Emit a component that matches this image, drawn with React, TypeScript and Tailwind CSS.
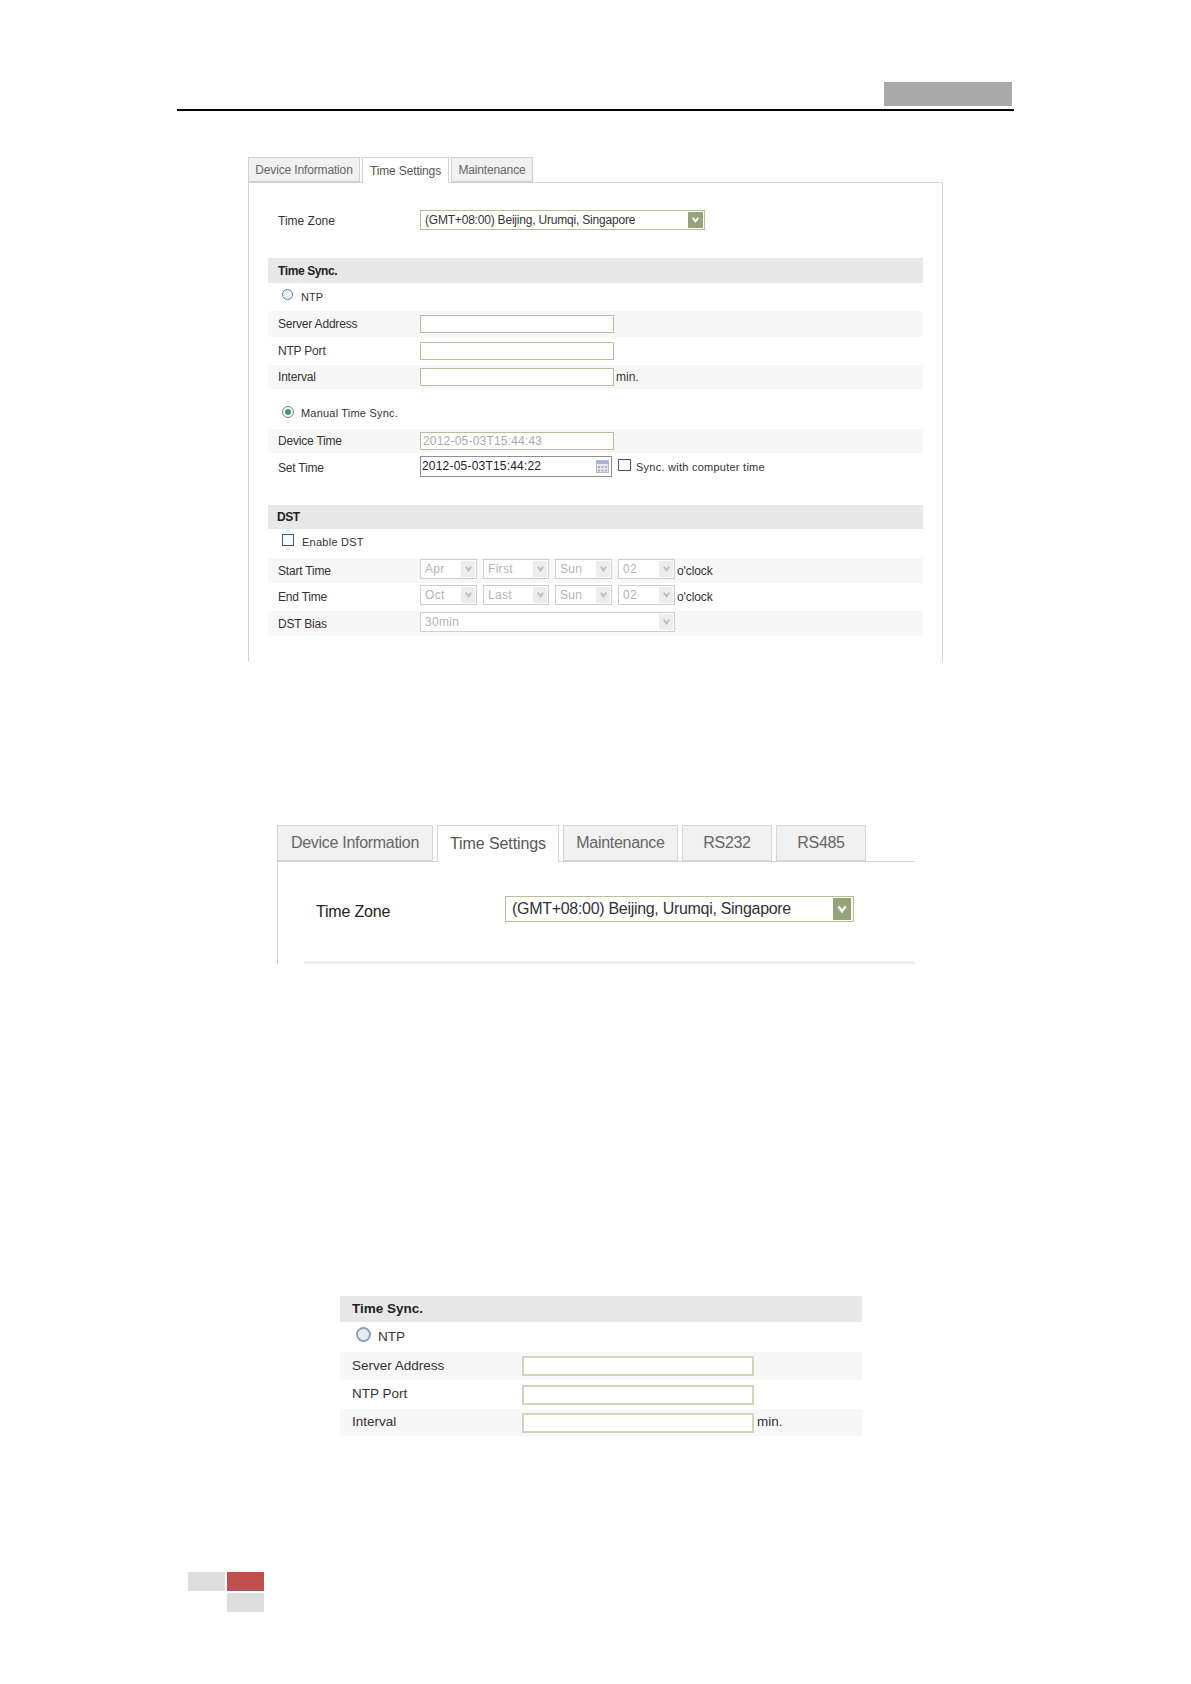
import type { ReactNode } from "react";

const font = { fontFamily: '"Liberation Sans", Arial, sans-serif' };

function SmallTab({ label, active, width }: { label: string; active?: boolean; width: string }) {
  return (
    <div
      className={`flex items-center justify-center border border-[#d2d2d2] text-[12px] tracking-[-0.15px] ${width} ${
        active
          ? "relative z-10 h-[26px] border-b-0 bg-white text-[#555]"
          : "h-[25px] bg-[#f1f1f1] text-[#666]"
      }`}
    >
      {label}
    </div>
  );
}

function BigTab({ label, active, width }: { label: string; active?: boolean; width: string }) {
  return (
    <div
      className={`flex items-center justify-center border border-[#d6d6d6] text-[16px] ${width} ${
        active
          ? "relative z-10 h-[37px] border-b-0 bg-white tracking-[-0.1px] text-[#555]"
          : "h-[36px] bg-[#f1f1f1] tracking-[-0.3px] text-[#666]"
      }`}
    >
      {label}
    </div>
  );
}

function Row({
  label,
  height,
  shaded,
  children,
}: {
  label: string;
  height: string;
  shaded?: boolean;
  children?: ReactNode;
}) {
  return (
    <div className={`flex items-center pl-[10px] ${height} ${shaded ? "bg-[#f7f7f7]" : ""}`}>
      <div className="w-[142px] shrink-0 text-[12px] tracking-[-0.2px] text-[#333]">{label}</div>
      {children}
    </div>
  );
}

function TextBox({ value }: { value?: string }) {
  return (
    <div className="flex h-[18px] w-[194px] items-center border border-[#b8be95] bg-white pl-[2px] text-[12px] tracking-[0.2px] text-[#aaa]">
      {value}
    </div>
  );
}

function Chevron({ className }: { className: string }) {
  return (
    <svg viewBox="0 0 10 8" className={className} fill="none" stroke="currentColor" strokeWidth="2">
      <path d="M2 2 L5 6 L8 2" />
    </svg>
  );
}

function DisabledSelect({ value, width }: { value: string; width: string }) {
  return (
    <div
      className={`flex h-[20px] items-center justify-between border border-[#cfcfcf] bg-white pl-[4px] pr-px text-[12px] tracking-[0.3px] text-[#b4b4b4] ${width}`}
    >
      {value}
      <span className="flex h-[16px] w-[14px] items-center justify-center bg-[#ededed] text-[#bdbdbd]">
        <Chevron className="w-[9px]" />
      </span>
    </div>
  );
}

function Panel() {
  return (
    <div className="ml-[248px] mt-[46px] w-[695px]">
      <div className="flex gap-[2px]">
        <SmallTab label="Device Information" width="w-[112px]" />
        <SmallTab label="Time Settings" active width="w-[87px]" />
        <SmallTab label="Maintenance" width="w-[82px]" />
      </div>
      <div className="-mt-px h-[480px] border-x border-t border-[#d2d2d2] pl-[19px] pr-[19px] pt-[27px]">
        <div className="flex h-[20px]">
          <div className="w-[152px] pl-[10px] pt-[2px] text-[12px] text-[#333]">Time Zone</div>
          <div className="flex w-[285px] items-center justify-between border border-[#b9c08f] bg-white pl-[4px] pr-[1px] text-[12px] tracking-[-0.2px] text-[#333]">
            (GMT+08:00) Beijing, Urumqi, Singapore
            <span className="flex h-[16px] w-[15px] items-center justify-center bg-[#93a37a] text-white">
              <Chevron className="w-[9px]" />
            </span>
          </div>
        </div>
        <div className="mt-[28px]">
          <div className="flex h-[25px] items-center bg-[#e8e8e8] pl-[10px] text-[12px] font-bold tracking-[-0.4px] text-[#222]">
            Time Sync.
          </div>
          <div className="flex h-[28px] items-center pl-[14px]">
            <span className="mb-[6px] h-[11px] w-[11px] rounded-full border border-[#5d7f9f] bg-[#f3f6f9]" />
            <span className="ml-[8px] text-[11px] text-[#333]">NTP</span>
          </div>
          <Row label="Server Address" height="h-[26px]" shaded>
            <TextBox />
          </Row>
          <Row label="NTP Port" height="h-[28px]">
            <TextBox />
          </Row>
          <Row label="Interval" height="h-[24px]" shaded>
            <TextBox />
            <span className="ml-[2px] text-[12px] text-[#333]">min.</span>
          </Row>
          <div className="flex h-[40px] items-center pl-[14px] pt-[6px]">
            <span className="flex h-[12px] w-[12px] items-center justify-center rounded-full border border-[#5d7f9f] bg-white">
              <span className="h-[6px] w-[6px] rounded-full bg-[#3f9a55]" />
            </span>
            <span className="ml-[7px] mt-[3px] text-[11px] tracking-[0.2px] text-[#333]">Manual Time Sync.</span>
          </div>
          <Row label="Device Time" height="h-[24px]" shaded>
            <TextBox value="2012-05-03T15:44:43" />
          </Row>
          <div className="flex h-[52px] items-start pl-[10px] pt-[3px]">
            <div className="mt-[3px] w-[142px] text-[12px] tracking-[-0.2px] text-[#333]">Set Time</div>
            <div className="flex h-[21px] w-[192px] items-start justify-between border border-[#8f8f8f] bg-white pl-[1px] pr-[2px] text-[12px] tracking-[0.2px] text-[#222]">
              2012-05-03T15:44:22
              <svg viewBox="0 0 13 13" className="mt-[3px] w-[13px]">
                <rect x="0.5" y="0.5" width="12" height="12" fill="#e6e8f2" stroke="#b6b9c8" />
                <rect x="1" y="1" width="11" height="3" fill="#a9b3d6" />
                <path d="M2 6h2v2H2zM5.5 6h2v2h-2zM9 6h2v2H9zM2 9.5h2v2H2zM5.5 9.5h2v2h-2zM9 9.5h2v2H9z" fill="#b5a7c6" />
              </svg>
            </div>
            <span className="ml-[6px] mt-[3px] h-[12px] w-[13px] border border-[#36597c] bg-[#f8fafc]" />
            <span className="ml-[5px] mt-[3px] text-[11px] tracking-[0.25px] text-[#333]">Sync. with computer time</span>
          </div>
          <div className="flex h-[24px] items-center bg-[#e8e8e8] pl-[9px] text-[12px] font-bold tracking-[-0.4px] text-[#222]">
            DST
          </div>
          <div className="flex h-[29px] items-center pl-[14px]">
            <span className="mb-[8px] h-[12px] w-[12px] border border-[#36597c] bg-[#f8fafc]" />
            <span className="mb-[3px] ml-[8px] text-[11px] tracking-[0.25px] text-[#333]">Enable DST</span>
          </div>
          <Row label="Start Time" height="h-[25px]" shaded>
            <div className="mb-[3px] flex gap-[6px]">
              <DisabledSelect value="Apr" width="w-[57px]" />
              <DisabledSelect value="First" width="w-[66px]" />
              <DisabledSelect value="Sun" width="w-[57px]" />
              <DisabledSelect value="02" width="w-[57px]" />
            </div>
            <span className="ml-[2px] text-[12px] tracking-[-0.1px] text-[#333]">o'clock</span>
          </Row>
          <Row label="End Time" height="h-[28px]">
            <div className="mb-[4px] flex gap-[6px]">
              <DisabledSelect value="Oct" width="w-[57px]" />
              <DisabledSelect value="Last" width="w-[66px]" />
              <DisabledSelect value="Sun" width="w-[57px]" />
              <DisabledSelect value="02" width="w-[57px]" />
            </div>
            <span className="ml-[2px] text-[12px] tracking-[-0.1px] text-[#333]">o'clock</span>
          </Row>
          <Row label="DST Bias" height="h-[25px]" shaded>
            <div className="mb-[3px]">
              <DisabledSelect value="30min" width="w-[255px]" />
            </div>
          </Row>
        </div>
      </div>
    </div>
  );
}

function TabsCrop() {
  return (
    <div className="ml-[277px] mt-[163px] w-[638px]">
      <div className="flex gap-[4px]">
        <BigTab label="Device Information" width="w-[156px]" />
        <BigTab label="Time Settings" active width="w-[122px]" />
        <BigTab label="Maintenance" width="w-[115px]" />
        <BigTab label="RS232" width="w-[90px]" />
        <BigTab label="RS485" width="w-[90px]" />
      </div>
      <div className="-mt-px h-[103px] border-l border-t border-[#d2d2d2] pl-[26px]">
        <div className="flex h-[99px] items-start pt-[34px]">
          <div className="mt-[4px] w-[201px] pl-[12px] text-[16px] tracking-[-0.2px] text-[#222]">Time Zone</div>
          <div className="flex h-[26px] w-[349px] items-center justify-between border border-[#b9c08f] bg-white pl-[6px] pr-[2px] text-[16px] tracking-[-0.3px] text-[#333]">
            (GMT+08:00) Beijing, Urumqi, Singapore
            <span className="flex h-[22px] w-[18px] items-center justify-center bg-[#93a37a] text-white">
              <Chevron className="w-[12px]" />
            </span>
          </div>
        </div>
        <div className="h-[3px] bg-[#eeeeee]" />
      </div>
    </div>
  );
}

function BigRow({
  label,
  height,
  shaded,
  children,
}: {
  label: string;
  height: string;
  shaded?: boolean;
  children?: ReactNode;
}) {
  return (
    <div className={`flex items-center pl-[12px] ${height} ${shaded ? "bg-[#f7f7f7]" : ""}`}>
      <div className="w-[170px] text-[13.5px] text-[#333]">{label}</div>
      {children}
    </div>
  );
}

function BigInput() {
  return <div className="h-[20px] w-[232px] border-2 border-[#d2d6b8] bg-white" />;
}

function TimeSyncCrop() {
  return (
    <div className="ml-[340px] mt-[332px] w-[522px]">
      <div className="flex h-[26px] items-center bg-[#e8e8e8] pl-[12px] text-[13.5px] font-bold text-[#222]">
        Time Sync.
      </div>
      <div className="flex h-[30px] items-center pl-[16px]">
        <span className="mb-[5px] h-[15px] w-[15px] rounded-full border-2 border-[#8aa0b5] bg-[#e6ebf1]" />
        <span className="ml-[7px] text-[13.5px] text-[#333]">NTP</span>
      </div>
      <BigRow label="Server Address" height="h-[28px]" shaded>
        <BigInput />
      </BigRow>
      <BigRow label="NTP Port" height="h-[29px]">
        <BigInput />
      </BigRow>
      <BigRow label="Interval" height="h-[27px]" shaded>
        <BigInput />
        <span className="ml-[3px] text-[13.5px] text-[#333]">min.</span>
      </BigRow>
    </div>
  );
}

export default function App() {
  return (
    <div className="h-[1684px] w-[1191px] overflow-hidden bg-white" style={font}>
      <div className="ml-[177px] w-[837px] pt-[82px]">
        <div className="ml-auto mr-[2px] h-[24px] w-[128px] bg-[#a9a9a9]" />
        <div className="mt-[3px] h-[2px] bg-black" />
      </div>
      <Panel />
      <TabsCrop />
      <TimeSyncCrop />
      <div className="ml-[188px] mt-[136px] grid w-[77px] grid-cols-[37px_37px] gap-[2px]">
        <div className="h-[19px] bg-[#dddddd]" />
        <div className="h-[19px] bg-[#c0504d]" />
        <div />
        <div className="h-[19px] bg-[#dddddd]" />
      </div>
    </div>
  );
}
